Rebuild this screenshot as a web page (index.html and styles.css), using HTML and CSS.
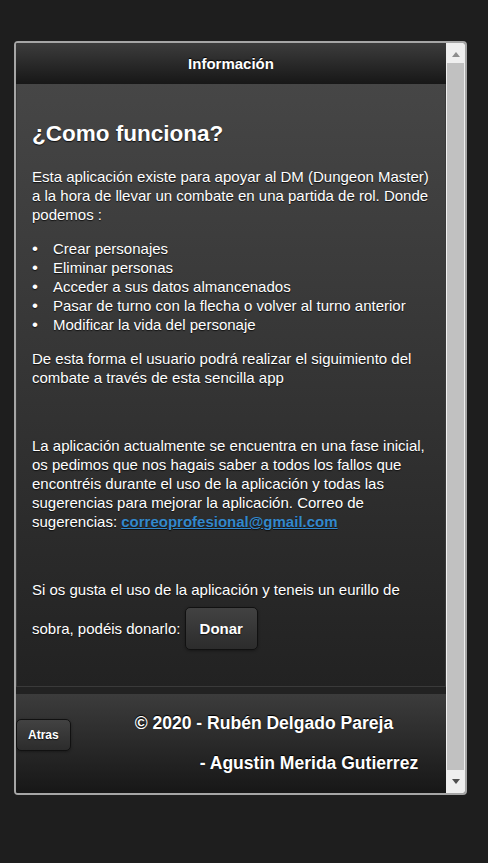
FILE: index.html
```html
<!DOCTYPE html>
<html lang="es">
<head>
<meta charset="utf-8">
<title>Información</title>
<link rel="stylesheet" href="styles.css">
</head>
<body>
<div class="page">
  <div class="dialog">
    <div class="viewport">
      <header class="bar-top"><h1>Información</h1></header>
      <main class="content">
        <h2>¿Como funciona?</h2>
        <p>Esta aplicación existe para apoyar al DM (Dungeon Master) a la hora de llevar un combate en una partida de rol. Donde podemos :</p>
        <ul>
          <li>Crear personajes</li>
          <li>Eliminar personas</li>
          <li>Acceder a sus datos almancenados</li>
          <li>Pasar de turno con la flecha o volver al turno anterior</li>
          <li>Modificar la vida del personaje</li>
        </ul>
        <p>De esta forma el usuario podrá realizar el siguimiento del combate a través de esta sencilla app</p>
        <p class="spacer">&nbsp;</p>
        <p>La aplicación actualmente se encuentra en una fase inicial, os pedimos que nos hagais saber a todos los fallos que encontréis durante el uso de la aplicación y todas las sugerencias para mejorar la aplicación. Correo de sugerencias: <a class="mail" href="#">correoprofesional@gmail.com</a></p>
        <p class="spacer">&nbsp;</p>
        <p>Si os gusta el uso de la aplicación y teneis un eurillo de sobra, podéis donarlo: <a class="btn btn-donate" href="#">Donar</a></p>
      </main>
      <footer class="bar-bottom">
        <a class="btn btn-back" href="#">Atras</a>
        <div class="credits">
          <div class="credit-line first">© 2020 - Rubén Delgado Pareja</div>
          <div class="credit-line second">- Agustin Merida Gutierrez</div>
        </div>
      </footer>
    </div>
    <div class="scrollbar">
      <div class="sb-btn sb-up"><span class="arrow-up"></span></div>
      <div class="sb-thumb"></div>
      <div class="sb-btn sb-down"><span class="arrow-down"></span></div>
    </div>
  </div>
</div>
</body>
</html>
```

FILE: styles.css
```css
* { box-sizing: border-box; }

html, body {
  margin: 0;
  background: #1e1e1e;
}

body {
  font-family: "Liberation Sans", Arial, sans-serif;
  font-size: 15px;
  color: #fff;
}

.page {
  padding: 41px 0 0 14px;
}

.dialog {
  display: flex;
  width: 453px;
  height: 754px;
  border: 2px solid #a6a6a6;
  border-radius: 4px;
  overflow: hidden;
  background: #222;
}

.viewport {
  width: 430px;
  flex: none;
  display: flex;
  flex-direction: column;
  background: #222;
}

.bar-top {
  flex: none;
  height: 41px;
  display: flex;
  align-items: center;
  justify-content: center;
  background: linear-gradient(#3c3c3c, #171717);
}

.bar-top h1 {
  margin: 0;
  font-size: 15px;
  font-weight: bold;
  line-height: 17px;
  text-shadow: 0 -1px 1px #000;
}

.content {
  flex: 1 1 0;
  min-height: 0;
  margin-bottom: 7px;
  padding: 15px;
  border: 1px solid #3a3a3a;
  border-top: 0;
  background: linear-gradient(#464646, #222);
  line-height: 19px;
  text-shadow: 0 1px 1px #111;
}

.content h2 {
  margin: 22px 0 20px;
  font-size: 22.5px;
  line-height: normal;
  font-weight: bold;
}

.content p {
  margin: 15px 0;
}

.content ul {
  margin: 15px 0;
  padding-left: 21px;
  list-style: none;
}

.content li {
  display: flex;
}

.content li::before {
  content: "\2022";
  flex: none;
  width: 21px;
  margin-left: -21px;
  font-size: 17px;
}

.mail {
  color: #3388cc;
  font-weight: bold;
  text-decoration: underline;
}

.btn {
  display: inline-block;
  color: #fff;
  font-weight: bold;
  text-decoration: none;
  background: linear-gradient(#424242, #2c2c2c);
  border: 1px solid #111;
  border-radius: 5px;
  box-shadow: 0 1px 3px rgba(0, 0, 0, 0.35);
  text-shadow: 0 1px 1px #111;
}

.btn-donate {
  font-size: 15px;
  line-height: 17px;
  padding: 12px 14px;
  margin: 8px 0 5px;
}

.bar-bottom {
  flex: none;
  height: 99px;
  display: flex;
  align-items: flex-start;
  background: linear-gradient(#3c3c3c, #171717);
}

.btn-back {
  margin-top: 25px;
  font-size: 12px;
  line-height: 14px;
  padding: 8px 11px;
}

.credits {
  margin-top: 19px;
  font-size: 17.55px;
  font-weight: bold;
  line-height: 20px;
  white-space: nowrap;
  text-shadow: 0 -1px 1px #000;
}

.credit-line.first {
  margin-left: 64px;
}

.credit-line.second {
  margin-top: 20px;
  margin-left: 129px;
}

.scrollbar {
  width: 19px;
  flex: none;
  display: flex;
  flex-direction: column;
  background: #efefef;
}

.sb-btn {
  flex: none;
  display: flex;
  align-items: center;
  justify-content: center;
}

.sb-up {
  height: 20px;
  padding-top: 2px;
}

.sb-down {
  height: 23px;
}

.sb-thumb {
  flex: 1;
  margin: 0 1px;
  background: #c1c1c1;
}

.arrow-up {
  width: 0;
  height: 0;
  border-left: 4.5px solid transparent;
  border-right: 4.5px solid transparent;
  border-bottom: 5px solid #8d8d8d;
}

.arrow-down {
  width: 0;
  height: 0;
  border-left: 4.5px solid transparent;
  border-right: 4.5px solid transparent;
  border-top: 5px solid #505050;
}
```
